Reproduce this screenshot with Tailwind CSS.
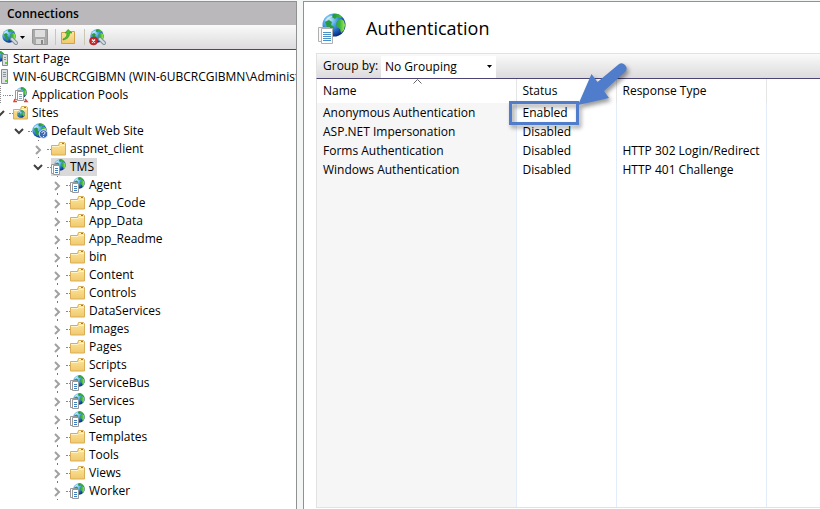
<!DOCTYPE html>
<html lang="en">
<head>
<meta charset="utf-8">
<title>Authentication</title>
<script src="https://cdn.jsdelivr.net/npm/@tailwindcss/browser@4"></script>
</head>
<body class="h-screen overflow-hidden bg-[#f4f5f5] text-black text-[12px] leading-[18px] font-['Open_Sans','Noto_Sans',sans-serif]">
<svg class="absolute size-0" aria-hidden="true">
  <defs>
    <radialGradient id="sea" cx="32%" cy="28%" r="75%">
      <stop offset="0" stop-color="#b9e6fb"/><stop offset=".4" stop-color="#4aa3e6"/><stop offset=".75" stop-color="#1c5cb8"/><stop offset="1" stop-color="#0b2c7c"/>
    </radialGradient>
    <linearGradient id="land" x1="0" y1="0" x2="1" y2="0">
      <stop offset="0" stop-color="#1f8f3a"/><stop offset=".6" stop-color="#3fb53c"/><stop offset="1" stop-color="#a4ee4e"/>
    </linearGradient>
    <linearGradient id="manila" x1="0" y1="0" x2="0" y2="1">
      <stop offset="0" stop-color="#fbe6a4"/><stop offset="1" stop-color="#f1c969"/>
    </linearGradient>
  </defs>
  <symbol id="globe" viewBox="0 0 24 24">
    <circle cx="12" cy="12" r="11.500" fill="url(#sea)"/>
    <path d="M11 1c4-1 7 0 9 3l-2 1-3-1-2 2-3-2zM15 8l4-2 3 2 1 4-1 5-3 3-1-4-3-2-1-3z" fill="url(#land)"/>
    <path d="M3 9l4-2 3 2-1 3 3 2-1 3-2 4-3-4z" fill="#2b9a45"/>
    <path d="M3 8c2-4 5-5 8-5-3 2-5 3-7 5z" fill="#fff" opacity=".6"/>
  </symbol>
  <symbol id="app" viewBox="0 0 16 16">
    <use href="#globe" x="3" y="0" width="12" height="12"/>
    <path d="M.5 5.500h6v9h-6z" fill="#fff" stroke="#999"/>
    <path d="M2.500 6.500h6v9h-6z" fill="#fff" stroke="#999"/>
    <path d="M4 9.500h3M4 11.500h3M4 13.500h3" stroke="#3f7fc0"/>
  </symbol>
  <symbol id="folder" viewBox="0 0 16 16">
    <path d="M.5 4.500h7l1-3h5l1 1v11.500h-14z" fill="url(#manila)" stroke="#d9ae58"/>
    <path d="M9 2.500h4" stroke="#fff"/><path d="M11 2.500h2" stroke="#3f8ed0"/>
    <path d="M1 5.500h7l1-1h5" fill="none" stroke="#fff3c9"/>
  </symbol>
  <symbol id="sites" viewBox="0 0 16 16">
    <use href="#folder" width="16" height="16"/><use href="#globe" x="4" y="5" width="8" height="8"/>
  </symbol>
  <symbol id="pools" viewBox="0 0 16 16">
    <use href="#globe" x="3" y="0" width="11" height="11"/>
    <path d="M2.500 3.500h6v9h-6z" fill="#fff" stroke="#999"/>
    <path d="M4.500 4.500h6v9h-6z" fill="#fff" stroke="#999"/>
    <path d="M6 7.500h3M6 9.500h3M6 11.500h3" stroke="#8aa6bd"/>
    <path d="M2 12l-1 2.500h3M12 12l2 2.500h-3" fill="none" stroke="#d1483f" stroke-width="1.500"/>
  </symbol>
  <symbol id="site" viewBox="0 0 16 16">
    <use href="#globe" width="15" height="15"/>
    <circle cx="11.500" cy="11" r="4.300" fill="#3f68b5" stroke="#e6edf8"/>
    <path d="M10 10c0-2 3-2 3 0 0 1-1.500 1-1.500 2M11.500 13v1" fill="none" stroke="#fff"/>
  </symbol>
  <symbol id="server" viewBox="0 0 16 16">
    <path d="M7.500.5h6v14h-6z" fill="#dce0e3" stroke="#858c92"/>
    <path d="M9 3.500h3M9 5.500h3M9 7.500h3" stroke="#8b9298"/>
    <path d="M11 11h2v2h-2z" fill="#5ed12c"/>
  </symbol>
  <symbol id="start" viewBox="0 0 16 16">
    <use href="#globe" x="0" y="0" width="11" height="11"/>
    <path d="M8.500 3.500h5v11h-5z" fill="#dce0e3" stroke="#858c92"/>
    <path d="M10 6.500h2M10 8.500h2" stroke="#8b9298"/><path d="M11 11h2v2h-2z" fill="#5ed12c"/>
  </symbol>
  <symbol id="closed" viewBox="0 0 16 18">
    <path d="M7 .5h1M7 17.500h1" stroke="#777"/>
    <path d="M5 6l4 4-4 4" fill="none" stroke="#a0a0a0" stroke-width="2"/>
  </symbol>
  <symbol id="open" viewBox="0 0 16 18">
    <path d="M3 7l4 4 4-4" fill="none" stroke="#404040" stroke-width="2"/>
  </symbol>
  <symbol id="dots" viewBox="0 0 16 18">
    <path d="M7.500 0v18M10 9.500h6" stroke="#8a8a8a" stroke-dasharray="1 1"/>
  </symbol>
  <symbol id="connect" viewBox="0 0 18 18">
    <use href="#globe" x="1" y="1" width="14" height="14"/>
    <path d="M11 11l4 4" stroke="#7f929e" stroke-width="4" stroke-linecap="round"/>
    <path d="M11 11l4 4" stroke="#d3dde3" stroke-width="2" stroke-linecap="round"/>
  </symbol>
</svg>

<div class="flex h-full gap-[6px] pt-px">
  <aside class="flex w-[297px] shrink-0 flex-col overflow-hidden border-t border-r border-[#919191] bg-white">
    <h2 class="h-[23px] shrink-0 bg-[#bab8ba] pl-[7px] text-[12px] leading-[23px] font-semibold">Connections</h2>
    <div class="flex h-[25px] shrink-0 items-center border-b border-[#4b4968] bg-linear-to-b from-[#fafafa] to-[#dddbdd]">
      <button aria-label="Connect" class="ml-px flex items-center gap-px">
        <svg class="size-[18px]"><use href="#connect"/></svg>
        <svg class="h-[3px] w-[5px]" viewBox="0 0 5 3"><path d="M0 0h5L2.500 3z"/></svg>
      </button>
      <button aria-label="Save" class="ml-[7px]">
        <svg class="size-4" viewBox="0 0 16 16"><path d="M.5.5h15v15H2l-1.500-1.500z" fill="#a9a9a9" stroke="#979797"/><path d="M3 1h10v7H3z" fill="#dedede"/><path d="M4 10h8v5H4z" fill="#d8d8d8"/><path d="M9 11h2v4H9z" fill="#888"/></svg>
      </button>
      <span class="ml-[7px] h-4 w-px bg-[#c9c6b4]"></span>
      <button aria-label="Up" class="ml-[4px]">
        <svg class="size-4" viewBox="0 0 16 16"><path d="M1.500 3.500h7l1-1h5v12h-13z" fill="url(#manila)" stroke="#d1a24b"/><path d="M3 10c3-1 4-3 4-6H5L8 .5 12 4H9.500c0 4-2 6-6.500 7z" fill="#4fc032" stroke="#2c8d1d" stroke-width=".6"/></svg>
      </button>
      <span class="ml-[8px] h-4 w-px bg-[#c9c6b4]"></span>
      <button aria-label="Disconnect" class="ml-[4px]">
        <svg class="size-[18px]" viewBox="0 0 18 18"><use href="#connect"/><circle cx="4.500" cy="13" r="4" fill="#d3262a" stroke="#a5181c" stroke-width=".6"/><path d="M3 11.500l3 3M6 11.500l-3 3" stroke="#fff" stroke-width="1.300"/></svg>
      </button>
    </div>
    <nav aria-label="Connections"><ul id="tree" class="-ml-[26px]"></ul></nav>
  </aside>

  <main class="flex min-w-0 flex-1 flex-col border-t border-l border-[#919191] bg-white pb-px pl-3">
    <header class="flex h-[51px] shrink-0 items-center gap-[15px]">
      <svg class="ml-px mt-1 size-[34px]" viewBox="0 0 34 34">
        <use href="#globe" x="5" y="0" width="24" height="24"/>
        <path d="M1.500 14.500h11v14h-11z" fill="#f8f8f8" stroke="#b0b0b0"/>
        <path d="M4.500 15.500h11v15h-11z" fill="#fff" stroke="#b0b0b0"/>
        <path d="M6 19.500h8M6 21.500h8M6 23.500h8M6 25.500h8M6 27.500h8" stroke="#4b8fc9"/>
      </svg>
      <h1 class="text-[18px] leading-[28px]">Authentication</h1>
    </header>
    <div class="flex h-[26px] shrink-0 items-end border-t border-b border-l border-t-[#e2e2e2] border-b-[#4b4474] border-l-[#e2e2e2] bg-linear-to-b from-[#fafafa] to-[#dddbdd] pl-[6px]">
      <label for="group" class="w-[58px] self-center whitespace-nowrap">Group by:</label>
      <div class="relative h-[22px] w-[115px]">
        <select id="group" class="h-full w-full appearance-none bg-white px-1"><option>No Grouping</option></select>
        <svg class="pointer-events-none absolute top-[9px] right-1 h-[3px] w-[5px]" viewBox="0 0 5 3"><path d="M0 0h5L2.500 3z"/></svg>
      </div>
    </div>
    <div class="relative min-h-0 flex-1 border-b border-l border-[#e2e2e2]">
      <table class="h-full w-full table-fixed border-collapse text-left whitespace-nowrap">
        <colgroup>
          <col class="w-[199px] bg-[#f6f6f6]"><col class="w-[100px]"><col class="w-[150px]"><col>
        </colgroup>
        <thead>
          <tr class="h-[24px] bg-white [&>th]:border-r [&>th]:border-[#e5e5e5] [&>th]:py-0 [&>th]:pl-[6px] [&>th]:font-normal">
            <th aria-sort="ascending" class="relative">Name
              <svg class="absolute top-0 left-[96px] h-[5px] w-[9px]" viewBox="0 0 9 5"><path d="M.5 4.500l4-4 4 4" fill="none" stroke="#666"/></svg>
            </th>
            <th>Status</th><th>Response Type</th><td></td>
          </tr>
        </thead>
        <tbody class="[&_td]:border-r [&_td]:border-[#e3edfa] [&_td]:py-0 [&_td]:pl-[6px] [&_td:last-child]:border-r-0">
          <tr class="h-[19px]"><td>Anonymous Authentication</td><td>Enabled</td><td></td><td></td></tr>
          <tr class="h-[19px]"><td>ASP.NET Impersonation</td><td>Disabled</td><td></td><td></td></tr>
          <tr class="h-[19px]"><td>Forms Authentication</td><td>Disabled</td><td>HTTP 302 Login/Redirect</td><td></td></tr>
          <tr class="h-[19px]"><td>Windows Authentication</td><td>Disabled</td><td>HTTP 401 Challenge</td><td></td></tr>
          <tr><td></td><td></td><td></td><td></td></tr>
        </tbody>
      </table>
      <svg class="pointer-events-none absolute -top-[19px] left-[187px] h-[74px] w-[130px] drop-shadow-[2px_3px_2px_rgb(0_0_0/0.4)]" viewBox="504 60 130 74" aria-hidden="true">
        <path d="M510.500 102.500h67v21h-67z" fill="none" stroke="#4f7ccb" stroke-width="3"/>
        <path d="M578 105l13.500-31 6 8 21-17.500a5 5 0 0 1 7 7L604 91l5 7z" fill="#4f7ccb"/>
      </svg>
    </div>
  </main>
</div>

<script>
const app = (name) => ({ name, icon: 'app', arrow: 'closed' });
const folder = (name) => ({ name, icon: 'folder', arrow: 'closed' });
const tree = [
  { name: 'Start Page', icon: 'start' },
  { name: 'WIN-6UBCRCGIBMN (WIN-6UBCRCGIBMN\\Administr', icon: 'server', arrow: 'open', children: [
    { name: 'Application Pools', icon: 'pools', arrow: 'dots' },
    { name: 'Sites', icon: 'sites', arrow: 'open', children: [
      { name: 'Default Web Site', icon: 'site', arrow: 'open', children: [
        folder('aspnet_client'),
        { name: 'TMS', icon: 'app', arrow: 'open', selected: true, children: [
          app('Agent'), folder('App_Code'), folder('App_Data'), folder('App_Readme'), folder('bin'),
          folder('Content'), folder('Controls'), folder('DataServices'), folder('Images'), folder('Pages'),
          folder('Scripts'), app('ServiceBus'), app('Services'), app('Setup'), folder('Templates'),
          folder('Tools'), folder('Views'), app('Worker')
        ] }
      ] }
    ] }
  ] }
];
const render = (node) => `<li>
  <div class="flex h-[18px] items-center whitespace-nowrap">
    <button class="h-[18px] w-4 shrink-0" aria-label="Toggle ${node.name}">${node.arrow ? `<svg class="h-[18px] w-4"><use href="#${node.arrow}"/></svg>` : ''}</button>
    <span class="w-[4px] shrink-0 border-t border-dotted border-[#888]"></span>
    <a href="#" class="flex items-center gap-[3px] pr-[3px] ${node.selected ? 'bg-[#d9d9d9]' : ''}"><svg class="size-4 shrink-0"><use href="#${node.icon}"/></svg>${node.name}</a>
  </div>${node.children ? `<ul class="pl-[19px]">${node.children.map(render).join('')}</ul>` : ''}</li>`;
document.getElementById('tree').innerHTML = tree.map(render).join('');
</script>
</body>
</html>
